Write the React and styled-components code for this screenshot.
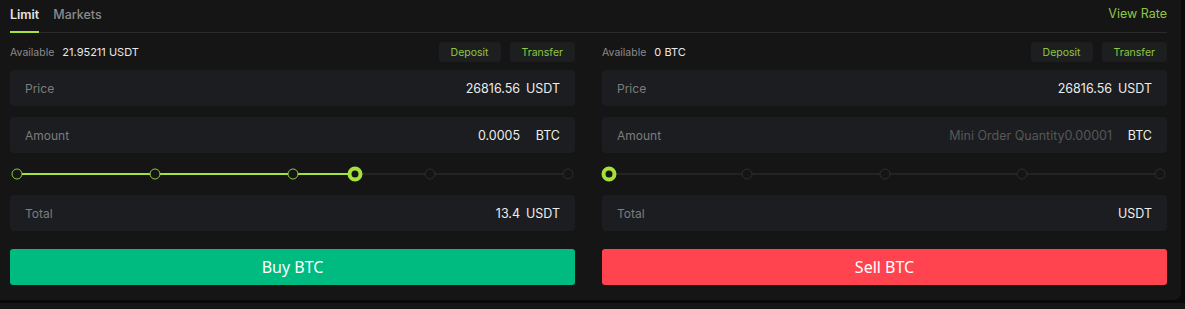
import React, { useState } from "react";
import styled, { createGlobalStyle } from "styled-components";

const GlobalStyle = createGlobalStyle`
  html, body {
    margin: 0;
    padding: 0;
    background: #0a0a0a;
  }
  body {
    font-family: Inter, "Noto Sans", "Liberation Sans", sans-serif;
    -webkit-font-smoothing: antialiased;
  }
`;

const LIME = "#a6e23a";
const GREEN_TEXT = "#8fc840";

function Slider({ value }) {
  const marks = [0, 25, 50, 75, 100];
  return (
    <SliderRow>
      <Track>
        <Fill style={{ width: `${value}%` }} />
        {marks.map((m) => (
          <Dot key={m} active={m <= value} style={{ left: `${m}%` }} />
        ))}
        <Thumb style={{ left: `${value}%` }} />
      </Track>
    </SliderRow>
  );
}

function Field({ label, value, placeholder, unit }) {
  return (
    <FieldBox>
      <FieldLabel>{label}</FieldLabel>
      <FieldValue muted={!value}>{value || placeholder}</FieldValue>
      <FieldUnit>{unit}</FieldUnit>
    </FieldBox>
  );
}

function OrderColumn({ side, available, price, amount, amountPlaceholder, total, slider }) {
  return (
    <Column>
      <AvailRow>
        <AvailLabel>Available</AvailLabel>
        <AvailValue>{available}</AvailValue>
        <Spacer />
        <SmallButton>Deposit</SmallButton>
        <SmallButton>Transfer</SmallButton>
      </AvailRow>
      <Field label="Price" value={price} unit="USDT" />
      <Gap h={11} />
      <Field label="Amount" value={amount} placeholder={amountPlaceholder} unit="BTC" />
      <Slider value={slider} />
      <Field label="Total" value={total} unit="USDT" />
      <Gap h={18} />
      <ActionButton side={side}>{side === "buy" ? "Buy BTC" : "Sell BTC"}</ActionButton>
    </Column>
  );
}

export default function App() {
  const [tab, setTab] = useState("limit");
  return (
    <>
      <GlobalStyle />
      <Page>
        <Panel>
          <Header>
            <Tab active={tab === "limit"} onClick={() => setTab("limit")}>Limit</Tab>
            <Tab active={tab === "markets"} onClick={() => setTab("markets")}>Markets</Tab>
            <Spacer />
            <ViewRate>View Rate</ViewRate>
          </Header>
          <Columns>
            <OrderColumn
              side="buy"
              available="21.95211 USDT"
              price="26816.56"
              amount="0.0005"
              total="13.4"
              slider={61.3}
            />
            <OrderColumn
              side="sell"
              available="0 BTC"
              price="26816.56"
              amountPlaceholder="Mini Order Quantity0.00001"
              total=""
              slider={0}
            />
          </Columns>
        </Panel>
        <BottomStrip />
      </Page>
    </>
  );
}

/* ---------- styled ---------- */

const Page = styled.div`
  width: 1185px;
  height: 309px;
  overflow: hidden;
  background: #0a0a0a;
`;

const Panel = styled.div`
  width: 1181px;
  box-sizing: border-box;
  height: 300px;
  padding: 0 14px 0 10px;
  background: #151515;
  border-radius: 0 0 7px 0;
`;

const BottomStrip = styled.div`
  margin-top: 3px;
  height: 6px;
  background: #161616;
`;

const Header = styled.div`
  display: flex;
  align-items: flex-end;
  height: 33px;
  box-sizing: border-box;
  border-bottom: 1px solid #2a2a2a;
  gap: 14px;
`;

const Tab = styled.div`
  font-size: 12.5px;
  font-weight: ${({ active }) => (active ? 600 : 500)};
  color: ${({ active }) => (active ? "#e6e6e6" : "#8a8a8a")};
  line-height: 18px;
  padding-bottom: 7px;
  margin-bottom: -1px;
  border-bottom: 2px solid ${({ active }) => (active ? LIME : "transparent")};
  cursor: pointer;
`;

const ViewRate = styled.div`
  align-self: center;
  margin-top: -5px;
  font-size: 12.5px;
  color: ${GREEN_TEXT};
`;

const Spacer = styled.div`
  flex: 1;
`;

const Columns = styled.div`
  display: grid;
  grid-template-columns: 1fr 1fr;
  gap: 27px;
  padding-top: 9px;
`;

const Column = styled.div`
  display: flex;
  flex-direction: column;
`;

const AvailRow = styled.div`
  display: flex;
  align-items: center;
  height: 20px;
  margin-bottom: 8px;
`;

const AvailLabel = styled.span`
  font-size: 10.5px;
  color: #8a8a8a;
  margin-right: 8px;
`;

const AvailValue = styled.span`
  font-size: 11px;
  color: #e8e8e8;
`;

const SmallButton = styled.button`
  height: 20px;
  padding: 0 12px;
  margin-left: 9px;
  border: none;
  border-radius: 3px;
  background: #1d1e20;
  color: ${GREEN_TEXT};
  font-family: inherit;
  font-size: 10.5px;
  cursor: pointer;
`;

const FieldBox = styled.div`
  display: flex;
  align-items: center;
  height: 36px;
  padding: 0 15px;
  border-radius: 4px;
  background: #1c1d20;
`;

const FieldLabel = styled.span`
  font-size: 12px;
  color: #7c7c7c;
`;

const FieldValue = styled.span`
  flex: 1;
  text-align: right;
  font-size: 12.5px;
  color: ${({ muted }) => (muted ? "#575757" : "#ececec")};
`;

const FieldUnit = styled.span`
  width: 40px;
  text-align: right;
  font-size: 12.5px;
  color: #ececec;
`;

const Gap = styled.div`
  height: ${({ h }) => h}px;
`;

const SliderRow = styled.div`
  height: 42px;
  display: flex;
  align-items: center;
  padding: 0 7px;
`;

const Track = styled.div`
  position: relative;
  flex: 1;
  height: 2px;
  background: #232323;
`;

const Fill = styled.div`
  height: 100%;
  background: ${LIME};
`;

const Dot = styled.span`
  position: absolute;
  top: 50%;
  width: 11px;
  height: 11px;
  box-sizing: border-box;
  border-radius: 50%;
  transform: translate(-50%, -50%);
  background: #151515;
  border: 1.5px solid ${({ active }) => (active ? "#8fc840" : "#2e2e2e")};
`;

const Thumb = styled.span`
  position: absolute;
  top: 50%;
  width: 15px;
  height: 15px;
  box-sizing: border-box;
  border-radius: 50%;
  transform: translate(-50%, -50%);
  background: #151515;
  border: 4px solid ${LIME};
`;

const ActionButton = styled.button`
  height: 36px;
  border: none;
  border-radius: 3px;
  background: ${({ side }) => (side === "buy" ? "#00bb80" : "#ff444f")};
  color: #ffffff;
  font-family: "Noto Sans", "Liberation Sans", sans-serif;
  font-size: 16px;
  font-weight: 400;
  cursor: pointer;
`;
